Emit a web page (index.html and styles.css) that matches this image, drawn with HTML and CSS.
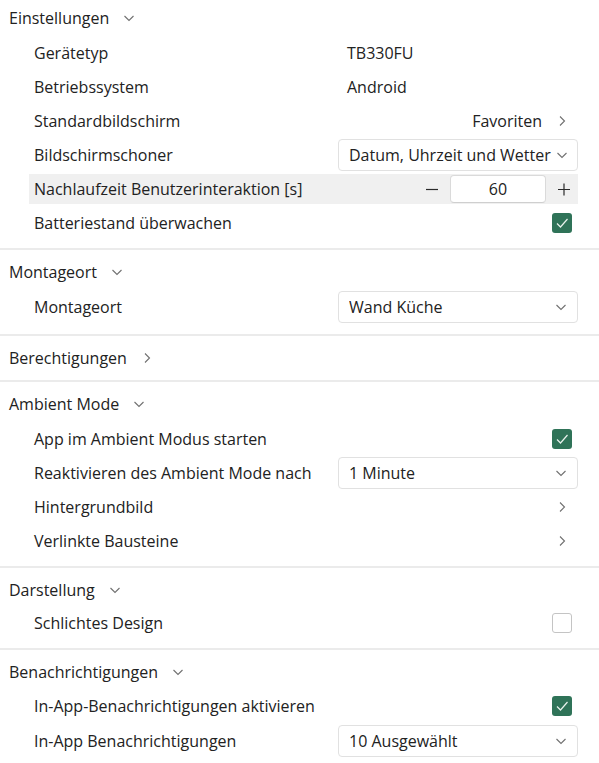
FILE: index.html
```html
<!DOCTYPE html>
<html lang="de">
<head>
<meta charset="utf-8">
<title>Einstellungen</title>
<link rel="stylesheet" href="styles.css">
</head>
<body>
<div class="page">

  <section class="section first">
    <div class="sec-head"><span>Einstellungen</span>
      <svg class="chev-down" width="12" height="12" viewBox="0 0 12 12"><path d="M1.5 4 L6 8.5 L10.5 4"/></svg>
    </div>
    <div class="rows">
      <div class="row"><span class="label">Gerätetyp</span><span class="value text">TB330FU</span></div>
      <div class="row"><span class="label">Betriebssystem</span><span class="value text">Android</span></div>
      <div class="row"><span class="label">Standardbildschirm</span>
        <span class="value link">Favoriten
          <svg class="chev-right" width="12" height="12" viewBox="0 0 12 12"><path d="M4 1.5 L8.5 6 L4 10.5"/></svg>
        </span>
      </div>
      <div class="row"><span class="label">Bildschirmschoner</span>
        <div class="value"><div class="select tight"><span class="sel-text">Datum, Uhrzeit und Wetter</span>
          <svg class="chev-down" width="12" height="12" viewBox="0 0 12 12"><path d="M1.5 4 L6 8.5 L10.5 4"/></svg></div></div>
      </div>
      <div class="row hl"><span class="label">Nachlaufzeit Benutzerinteraktion [s]</span>
        <div class="value stepper">
          <svg class="step-btn" width="14" height="14" viewBox="0 0 14 14"><path d="M1 7.5 H13"/></svg>
          <div class="num">60</div>
          <svg class="step-btn" width="14" height="14" viewBox="0 0 14 14"><path d="M1 7.5 H13 M7 1.5 V13.5"/></svg>
        </div>
      </div>
      <div class="row"><span class="label">Batteriestand überwachen</span>
        <div class="value check-cell"><span class="cb on"><svg width="20" height="20" viewBox="0 0 20 20"><path d="M5 10.5 L8.5 14 L15.5 6"/></svg></span></div>
      </div>
    </div>
  </section>

  <section class="section mount">
    <div class="sec-head"><span>Montageort</span>
      <svg class="chev-down" width="12" height="12" viewBox="0 0 12 12"><path d="M1.5 4 L6 8.5 L10.5 4"/></svg>
    </div>
    <div class="rows">
      <div class="row"><span class="label">Montageort</span>
        <div class="value"><div class="select"><span class="sel-text">Wand Küche</span>
          <svg class="chev-down" width="12" height="12" viewBox="0 0 12 12"><path d="M1.5 4 L6 8.5 L10.5 4"/></svg></div></div>
      </div>
    </div>
  </section>

  <section class="section collapsed">
    <div class="sec-head"><span>Berechtigungen</span>
      <svg class="chev-right" width="12" height="12" viewBox="0 0 12 12"><path d="M4 1.5 L8.5 6 L4 10.5"/></svg>
    </div>
  </section>

  <section class="section">
    <div class="sec-head"><span>Ambient Mode</span>
      <svg class="chev-down" width="12" height="12" viewBox="0 0 12 12"><path d="M1.5 4 L6 8.5 L10.5 4"/></svg>
    </div>
    <div class="rows">
      <div class="row"><span class="label">App im Ambient Modus starten</span>
        <div class="value check-cell"><span class="cb on"><svg width="20" height="20" viewBox="0 0 20 20"><path d="M5 10.5 L8.5 14 L15.5 6"/></svg></span></div>
      </div>
      <div class="row"><span class="label">Reaktivieren des Ambient Mode nach</span>
        <div class="value"><div class="select"><span class="sel-text">1 Minute</span>
          <svg class="chev-down" width="12" height="12" viewBox="0 0 12 12"><path d="M1.5 4 L6 8.5 L10.5 4"/></svg></div></div>
      </div>
      <div class="row"><span class="label">Hintergrundbild</span>
        <span class="value link"><svg class="chev-right" width="12" height="12" viewBox="0 0 12 12"><path d="M4 1.5 L8.5 6 L4 10.5"/></svg></span>
      </div>
      <div class="row"><span class="label">Verlinkte Bausteine</span>
        <span class="value link"><svg class="chev-right" width="12" height="12" viewBox="0 0 12 12"><path d="M4 1.5 L8.5 6 L4 10.5"/></svg></span>
      </div>
    </div>
  </section>

  <section class="section compact">
    <div class="sec-head"><span>Darstellung</span>
      <svg class="chev-down" width="12" height="12" viewBox="0 0 12 12"><path d="M1.5 4 L6 8.5 L10.5 4"/></svg>
    </div>
    <div class="rows">
      <div class="row"><span class="label">Schlichtes Design</span>
        <div class="value check-cell"><span class="cb"></span></div>
      </div>
    </div>
  </section>

  <section class="section last">
    <div class="sec-head"><span>Benachrichtigungen</span>
      <svg class="chev-down" width="12" height="12" viewBox="0 0 12 12"><path d="M1.5 4 L6 8.5 L10.5 4"/></svg>
    </div>
    <div class="rows">
      <div class="row"><span class="label">In-App-Benachrichtigungen aktivieren</span>
        <div class="value check-cell"><span class="cb on"><svg width="20" height="20" viewBox="0 0 20 20"><path d="M5 10.5 L8.5 14 L15.5 6"/></svg></span></div>
      </div>
      <div class="row"><span class="label">In-App Benachrichtigungen</span>
        <div class="value"><div class="select"><span class="sel-text">10 Ausgewählt</span>
          <svg class="chev-down" width="12" height="12" viewBox="0 0 12 12"><path d="M1.5 4 L6 8.5 L10.5 4"/></svg></div></div>
      </div>
    </div>
  </section>

</div>
</body>
</html>
```

FILE: styles.css
```css
* { box-sizing: border-box; }

html, body {
  margin: 0;
  padding: 0;
  background: #ffffff;
}

body {
  font-family: "Open Sans", "Noto Sans", "Liberation Sans", sans-serif;
  font-size: 16px;
  color: #222222;
}

.page {
  width: 599px;
}

.section {
  padding: 5px 0 5px 0;
  border-bottom: 2px solid #ebebeb;
}

.section.first { padding-top: 1px; }
.section.mount { padding-bottom: 7px; }
.section.compact { padding-bottom: 5px; }
.section.compact .rows { padding-top: 1px; }
.section.last { border-bottom: none; }
.section.last .rows { padding-top: 2px; gap: 5px; }

.sec-head {
  height: 34px;
  display: flex;
  align-items: center;
  padding-left: 9px;
  gap: 14px;
}

.chev-down path,
.chev-right path {
  fill: none;
  stroke: #707070;
  stroke-width: 1.1;
}

.rows {
  display: flex;
  flex-direction: column;
  gap: 4px;
  padding-top: 3px;
  padding-bottom: 5px;
}

.row {
  height: 30px;
  margin: 0 21px 0 29px;
  padding-left: 5px;
  display: grid;
  grid-template-columns: 1fr 240px;
  align-items: center;
}

.row.hl {
  background: #f0f0f0;
}

.label {
  white-space: nowrap;
}

.value {
  display: flex;
  align-items: center;
  height: 100%;
}

.value.text {
  padding-left: 9px;
}

.value.link {
  justify-content: flex-end;
  gap: 14px;
  padding-right: 10px;
}

.select {
  width: 240px;
  height: 32px;
  margin: -1px 0;
  border: 1px solid #e1e1e1;
  border-radius: 4px;
  background: #fff;
  display: flex;
  align-items: center;
  padding: 0 10px 0 10px;
}

.select.tight { padding-right: 9px; }

.sel-text {
  flex: 1;
  white-space: nowrap;
  overflow: hidden;
}

.select .chev-down { flex-shrink: 0; }

.stepper {
  justify-content: flex-end;
  padding-right: 7px;
}

.step-btn path {
  fill: none;
  stroke: #2a2a2a;
  stroke-width: 1.2;
}

.num {
  width: 96px;
  height: 28px;
  margin: 0 11px 0 11px;
  border: 1px solid #dadada;
  border-bottom-color: #cfcfcf;
  border-radius: 4px;
  background: #fff;
  display: flex;
  align-items: center;
  justify-content: center;
}

.check-cell {
  justify-content: flex-end;
  padding-right: 6px;
}

.cb {
  width: 20px;
  height: 20px;
  border-radius: 3px;
  border: 1px solid #c4c4c4;
  background: #fff;
  display: block;
}

.cb.on {
  border: none;
  background: #2f7358;
}

.cb svg { display: block; }

.cb svg path {
  fill: none;
  stroke: #e8f2ec;
  stroke-width: 1.2;
}
```
